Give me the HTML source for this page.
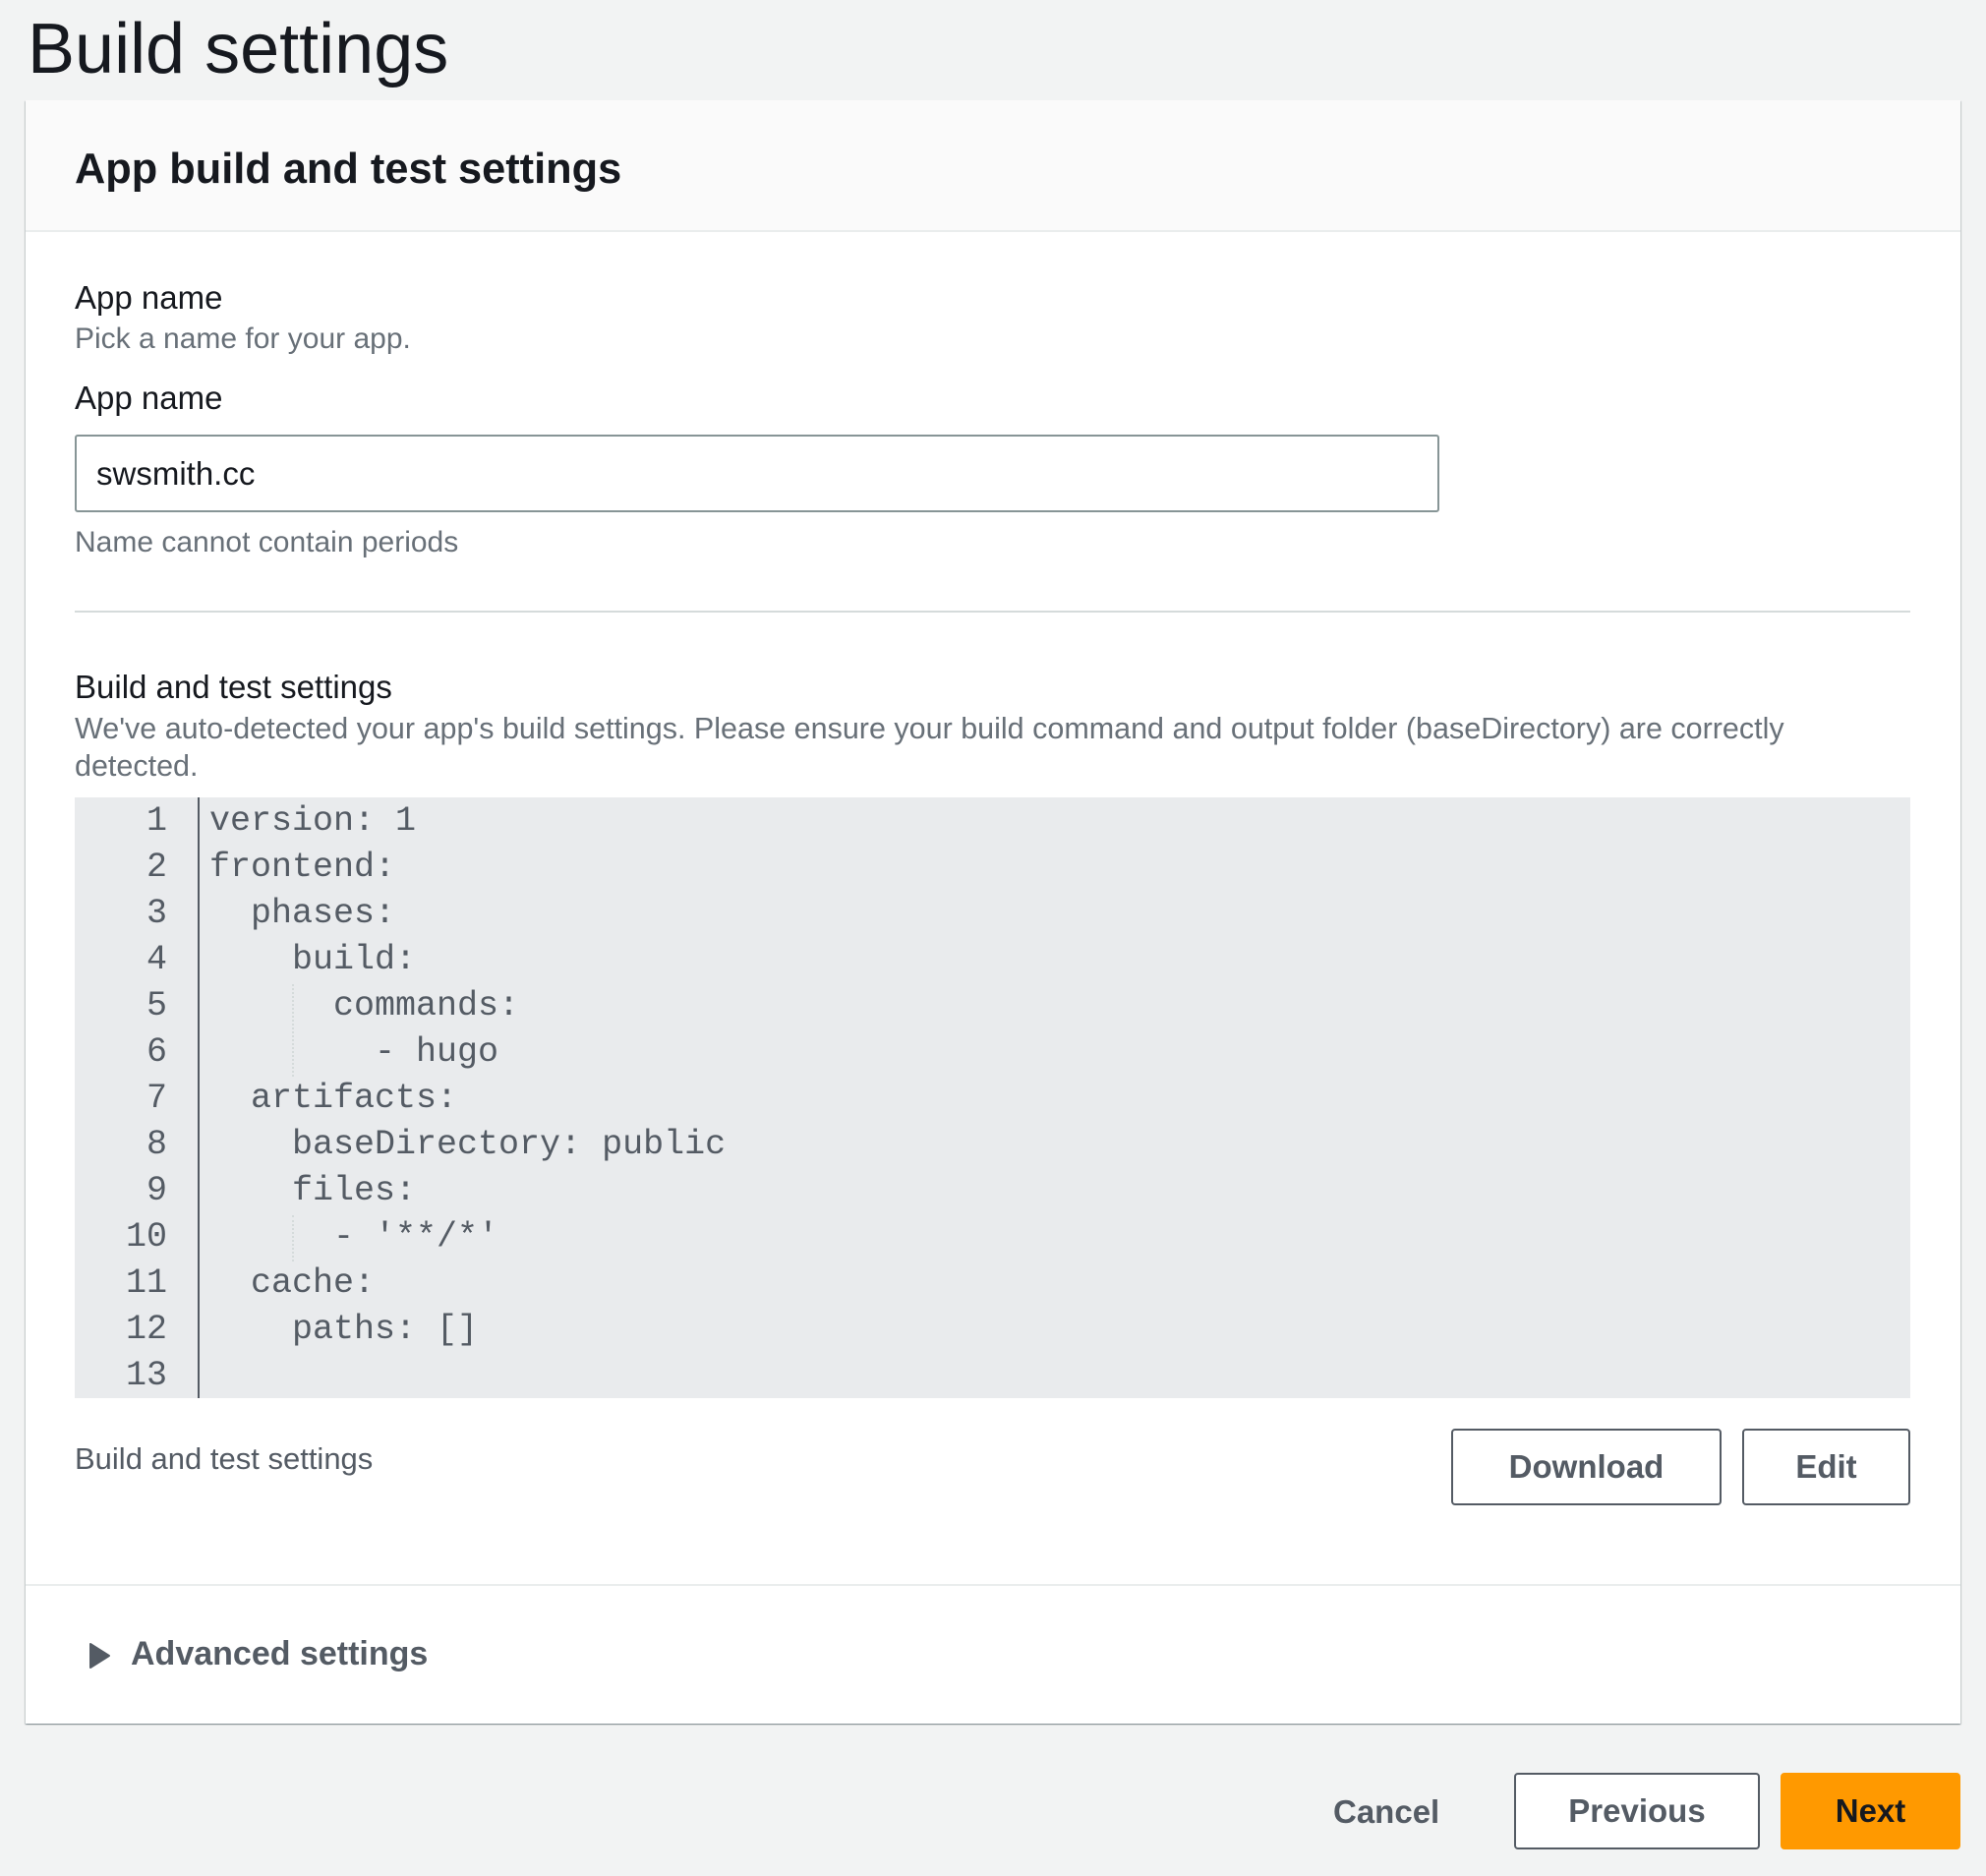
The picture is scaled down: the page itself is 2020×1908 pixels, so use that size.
<!DOCTYPE html>
<html><head><meta charset="utf-8">
<style>
*{margin:0;padding:0;box-sizing:border-box}
body{width:2020px;height:1908px;background:#f2f3f3;font-family:"Liberation Sans",sans-serif;position:relative;overflow:hidden;color:#16191f}
.t{position:absolute;line-height:1;white-space:nowrap}
.card{position:absolute;left:26px;top:102px;width:1968px;height:1651px;background:#fff;box-shadow:0 1px 1px 0 rgba(0,28,36,.3),1px 1px 1px 0 rgba(0,28,36,.15),-1px 1px 1px 0 rgba(0,28,36,.15)}
.hdr{position:absolute;left:0;top:0;width:100%;height:134px;background:#fafafa;border-bottom:2px solid #eaeded}
.gray{color:#687078}
.code{position:absolute;left:76px;top:811px;width:1867px;height:611px;background:#e9ebed}
.gut{position:absolute;left:201px;top:811px;width:2px;height:611px;background:#545b64}
.ln{position:absolute;font-family:"Liberation Mono",monospace;font-size:35px;line-height:47px;color:#545b64;white-space:pre}
.btn{position:absolute;border:2px solid #545b64;border-radius:4px;background:#fff;color:#545b64;font-weight:bold;font-size:33px;display:flex;align-items:center;justify-content:center}
.guide{position:absolute;width:0;border-left:2px dotted #d5dbdb}
</style></head><body>
<div class="t" style="left:28px;top:14px;font-size:72px">Build settings</div>
<div class="card">
 <div class="hdr"></div>
</div>
<div class="t" style="left:76px;top:150px;font-size:44px;font-weight:bold;transform:scaleX(0.985);transform-origin:left">App build and test settings</div>
<div class="t" style="left:76px;top:286px;font-size:33px">App name</div>
<div class="t gray" style="left:76px;top:330px;font-size:30px">Pick a name for your app.</div>
<div class="t" style="left:76px;top:388px;font-size:33px">App name</div>
<div style="position:absolute;left:76px;top:442px;width:1388px;height:79px;border:2px solid #879596;border-radius:3px;background:#fff"></div>
<div class="t" style="left:98px;top:465px;font-size:33px">swsmith.cc</div>
<div class="t gray" style="left:76px;top:537px;font-size:30px">Name cannot contain periods</div>
<div style="position:absolute;left:76px;top:621px;width:1867px;height:2px;background:#d5dbdb"></div>
<div class="t" style="left:76px;top:682px;font-size:33px">Build and test settings</div>
<div class="t gray" style="left:76px;top:726px;font-size:30.5px">We've auto-detected your app's build settings. Please ensure your build command and output folder (baseDirectory) are correctly</div>
<div class="t gray" style="left:76px;top:764px;font-size:30.5px">detected.</div>
<div class="code"></div>
<div class="gut"></div>
<div class="ln" style="left:100px;top:812px;width:70px;text-align:right">1
2
3
4
5
6
7
8
9
10
11
12
13</div>
<div class="ln" style="left:213px;top:812px">version: 1
frontend:
  phases:
    build:
      commands:
        - hugo
  artifacts:
    baseDirectory: public
    files:
      - '**/*'
  cache:
    paths: []
</div>
<div class="guide" style="left:297px;top:1001px;height:94px"></div>
<div class="guide" style="left:297px;top:1236px;height:47px"></div>
<div class="t gray" style="left:76px;top:1468px;font-size:31px;color:#545b64">Build and test settings</div>
<div class="btn" style="left:1476px;top:1453px;width:275px;height:78px">Download</div>
<div class="btn" style="left:1772px;top:1453px;width:171px;height:78px">Edit</div>
<div style="position:absolute;left:26px;top:1611px;width:1968px;height:2px;background:#eaeded"></div>
<svg style="position:absolute;left:90px;top:1670px" width="24" height="28" viewBox="0 0 24 28"><path d="M2 2 L21 14 L2 26 Z" fill="#545b64" stroke="#545b64" stroke-width="2" stroke-linejoin="round"/></svg>
<div class="t" style="left:133px;top:1665px;font-size:34px;font-weight:bold;color:#545b64">Advanced settings</div>
<div class="t" style="left:1356px;top:1826px;font-size:33px;font-weight:bold;color:#545b64">Cancel</div>
<div class="btn" style="left:1540px;top:1803px;width:250px;height:78px">Previous</div>
<div class="btn" style="left:1811px;top:1803px;width:183px;height:78px;background:#ff9900;border-color:#ff9900;color:#16191f">Next</div>
</body></html>
